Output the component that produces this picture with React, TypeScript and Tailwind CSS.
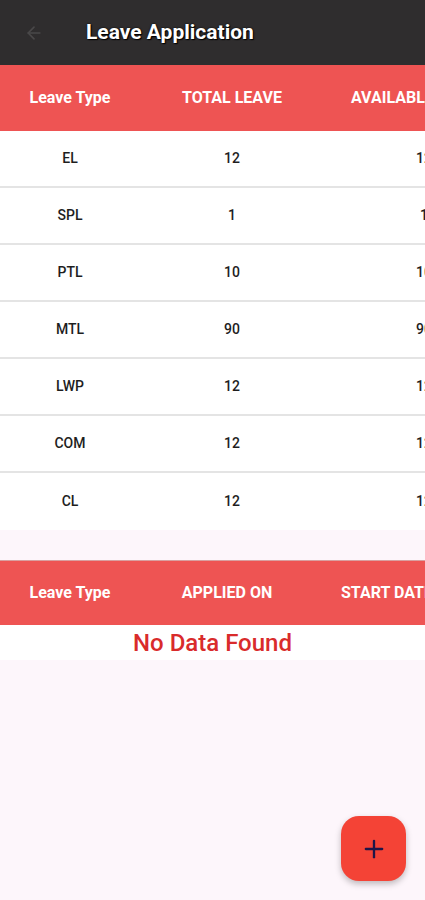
import { ArrowLeft, Plus } from 'lucide-react';

const leaves = [
    { type: 'EL', total: 12, available: 12 },
    { type: 'SPL', total: 1, available: 1 },
    { type: 'PTL', total: 10, available: 10 },
    { type: 'MTL', total: 90, available: 90 },
    { type: 'LWP', total: 12, available: 12 },
    { type: 'COM', total: 12, available: 12 },
    { type: 'CL', total: 12, available: 12 },
];

const App = () => {
    return (
        <div className="relative min-h-[900px] w-full overflow-hidden bg-[#fdf6fb]" style={{ fontFamily: 'Roboto, "Noto Sans", sans-serif' }}>
            <header className="flex h-[65px] items-center bg-[#2f2d2e]">
                <ArrowLeft className="ml-[24px] h-[20px] w-[20px] text-[#4a4849]" strokeWidth={2} />
                <h1 className="ml-[42px] text-[21px] font-bold text-white [text-shadow:0_0_2px_#000,1px_1px_1px_#000]">Leave Application</h1>
            </header>

            {/* leave balance */}
            <div className="w-full overflow-hidden bg-white">
                <div className="flex h-[66px] w-[600px] items-center bg-[#ee5453] text-[16px] font-bold text-white">
                    <div className="w-[140px] text-center">Leave Type</div>
                    <div className="w-[184px] text-center">TOTAL LEAVE</div>
                    <div className="pl-[27px] whitespace-nowrap">AVAILABLE LEAVE</div>
                </div>
                {leaves.map((leave, index) => (
                    <div
                        key={leave.type}
                        className={`flex h-[57px] w-[600px] items-center text-[14px] font-medium text-[#1e1e1e] ${index < leaves.length - 1 ? 'border-b-2 border-[#e4e4e4]' : ''}`}
                    >
                        <div className="w-[140px] text-center">{leave.type}</div>
                        <div className="w-[184px] text-center">{leave.total}</div>
                        <div className="w-[200px] text-center">{leave.available}</div>
                    </div>
                ))}
            </div>

            {/* applications */}
            <div className="mt-[30px] w-full overflow-hidden">
                <div className="flex h-[65px] w-[600px] items-center border-t border-[#d9a0a0] bg-[#ee5453] text-[16px] font-bold text-white">
                    <div className="w-[140px] text-center">Leave Type</div>
                    <div className="w-[174px] text-center">APPLIED ON</div>
                    <div className="pl-[27px] whitespace-nowrap">START DATE</div>
                </div>
                <div className="flex h-[35px] items-center justify-center bg-white text-[24px] font-medium leading-none text-[#d92b2b]">
                    No Data Found
                </div>
            </div>

            <button className="absolute left-[341px] top-[816px] flex h-[65px] w-[65px] items-center justify-center rounded-[18px] bg-[#f44336] shadow-[0_3px_6px_rgba(0,0,0,0.25)]">
                <Plus className="h-[28px] w-[28px] text-[#1f1548]" strokeWidth={2} />
            </button>
        </div>
    );
};

export default App;
